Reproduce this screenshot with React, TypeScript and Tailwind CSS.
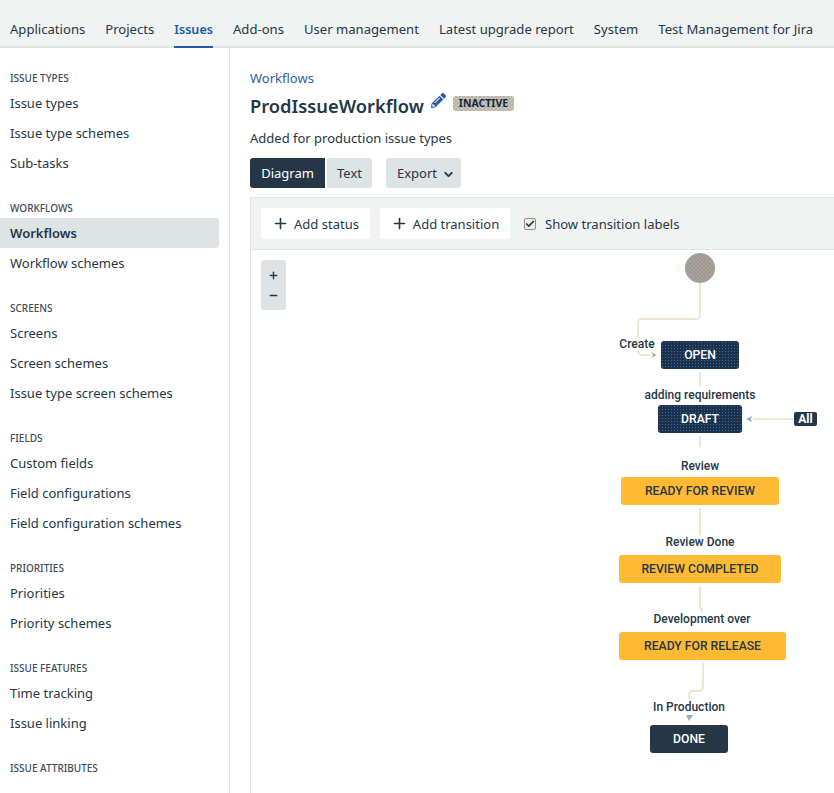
import { Check, ChevronDown, Minus, Plus } from 'lucide-react';
import { FaPencilAlt } from 'react-icons/fa';

const tabs = ['Applications', 'Projects', 'Issues', 'Add-ons', 'User management', 'Latest upgrade report', 'System', 'Test Management for Jira'];

const sections = [
  { title: 'ISSUE TYPES', items: ['Issue types', 'Issue type schemes', 'Sub-tasks'] },
  { title: 'WORKFLOWS', items: ['Workflows', 'Workflow schemes'] },
  { title: 'SCREENS', items: ['Screens', 'Screen schemes', 'Issue type screen schemes'] },
  { title: 'FIELDS', items: ['Custom fields', 'Field configurations', 'Field configuration schemes'] },
  { title: 'PRIORITIES', items: ['Priorities', 'Priority schemes'] },
  { title: 'ISSUE FEATURES', items: ['Time tracking', 'Issue linking'] },
  { title: 'ISSUE ATTRIBUTES', items: [] as string[] },
];

// positions are relative to the canvas, whose corner sits at 251,250
const nodes = [
  { name: 'OPEN', left: 410, top: 91, width: 78, kind: 'blue' },
  { name: 'DRAFT', left: 407, top: 155, width: 84, kind: 'blue' },
  { name: 'READY FOR REVIEW', left: 370, top: 227, width: 158, kind: 'amber' },
  { name: 'REVIEW COMPLETED', left: 368, top: 305, width: 162, kind: 'amber' },
  { name: 'READY FOR RELEASE', left: 368, top: 382, width: 167, kind: 'amber' },
  { name: 'DONE', left: 399, top: 475, width: 78, kind: 'dark' },
];

const labels = [
  { text: 'Create', x: 386, y: 94 },
  { text: 'adding requirements', x: 449, y: 145 },
  { text: 'Review', x: 449, y: 216 },
  { text: 'Review Done', x: 449, y: 292 },
  { text: 'Development over', x: 451, y: 369 },
  { text: 'In Production', x: 438, y: 457 },
];

function WorkflowCanvas() {
  return (
    <div className="relative flex-1">
      <div className="absolute left-[10px] top-[10px] flex h-[50px] w-[25px] flex-col items-center justify-center gap-[9px] rounded-[3px] bg-[#dee3e5] text-[#253746]">
        <Plus size={11} strokeWidth={3} />
        <Minus size={11} strokeWidth={3} />
      </div>

      <svg className="absolute left-0 top-0 h-[543px] w-[583px]" fill="none" stroke="#e6e0c8" strokeWidth="1.5">
        <path d="M449 33V65Q449 69 445 69H391Q387 69 387 73V100Q387 105 392 105H400" />
        <path d="M449 122V136" />
        <path d="M449 186V197" />
        <path d="M449 258V285" />
        <path d="M449 336V357Q449 358 451 359V364" />
        <path d="M452 413V436Q452 441 447 441H442Q438 441 438 446V449" />
        <path d="M544 169H502" />
        <path d="M400 102L406 105L400 108L402 105Z" fill="#b9a890" stroke="none" />
        <path d="M495 169L501 166L500 169L501 172Z" fill="#8fb0c4" stroke="none" />
        <path d="M435 465H442L438 471Z" fill="#8fb0c4" stroke="none" />
      </svg>

      <div className="absolute left-[434px] top-[3px] h-[30px] w-[30px] rounded-full bg-[repeating-conic-gradient(#cf8a50_0_25%,#74aedb_0_50%)] bg-[length:4px_4px]" />

      {labels.map((l) => (
        <span
          key={l.text}
          style={{ left: l.x, top: l.y }}
          className="absolute -translate-x-1/2 -translate-y-1/2 whitespace-nowrap bg-white font-['Roboto',sans-serif] text-[12px] font-medium leading-[13px] text-[#253746]"
        >
          {l.text}
        </span>
      ))}

      {nodes.map((n) => (
        <div
          key={n.name}
          style={{ left: n.left, top: n.top, width: n.width }}
          className={`absolute flex h-[28px] items-center justify-center rounded-[3px] pt-[1px] font-['Roboto',sans-serif] text-[12.2px] font-medium ${
            n.kind === 'amber'
              ? 'bg-[#ffb932] text-[#253746]'
              : n.kind === 'blue'
                ? 'bg-[#1f3148] bg-[radial-gradient(#1f6fc4_0.7px,transparent_0.8px)] bg-[length:3px_3px] font-bold text-white'
                : 'bg-[#253746] font-bold text-white'
          }`}
        >
          {n.name}
        </div>
      ))}

      <span className="absolute left-[543px] top-[162px] flex h-[14px] w-[23px] items-center justify-center rounded-[2px] bg-[#253746] font-['Roboto',sans-serif] text-[12px] font-bold text-white">
        All
      </span>
    </div>
  );
}

export default function App() {
  return (
    <div className="flex h-[793px] w-[834px] flex-col overflow-hidden bg-white font-['Noto_Sans',sans-serif] text-[13px] text-[#253746]">
      <nav className="flex h-[48px] shrink-0 items-start border-b-2 border-[#dfe5e6] bg-[#f1f3f3] pl-[10px] text-[13.1px]">
        {tabs.map((t) => (
          <a
            key={t}
            className={`mr-[20px] flex h-[48px] items-center whitespace-nowrap border-b-2 ${
              t === 'Issues' ? 'border-[#205aa7] pt-[14px] text-[12.6px] font-semibold text-[#205aa7]' : 'border-transparent pt-[13px]'
            }`}
          >
            {t}
          </a>
        ))}
      </nav>

      <div className="flex min-h-0 flex-1">
        <aside className="w-[230px] shrink-0 border-r border-[#dfe5e6] pr-[10px] pt-[18px]">
          {sections.map((s) => (
            <div key={s.title} className="mb-[18px]">
              <h3 className="flex h-[22px] items-center pl-[10px] pt-[2px] text-[10px] font-medium text-[#3e4c59]">{s.title}</h3>
              {s.items.map((i) => (
                <a
                  key={i}
                  className={`flex h-[30px] items-center rounded-r-[3px] pl-[10px] pt-[2px] ${
                    i === 'Workflows' ? 'bg-[#dee3e5] font-semibold' : ''
                  }`}
                >
                  {i}
                </a>
              ))}
            </div>
          ))}
        </aside>

        <main className="flex min-w-0 flex-1 flex-col pl-[20px] pt-[20px]">
          <a className="text-[13px] leading-[20px] text-[#2a5f9e]">Workflows</a>
          <div className="mt-[5px] flex h-[26px] items-center">
            <h1 className="text-[18.3px] font-semibold">ProdIssueWorkflow</h1>
            <FaPencilAlt className="mb-[12px] ml-[7px] text-[#2d5c96]" size={15} />
            <span className="mb-[5px] ml-[7px] rounded-[3px] bg-[repeating-conic-gradient(#d9a878_0_25%,#a9cfe6_0_50%)] bg-[length:4px_4px] px-[6px] text-[10.5px] font-bold leading-[15px] text-[#17263a]">
              INACTIVE
            </span>
          </div>
          <p className="mt-[9px] leading-[20px]">Added for production issue types</p>

          <div className="mt-[10px] flex h-[30px] shrink-0">
            <button className="w-[75px] rounded-l-[3px] bg-[#253746] pt-[2px] text-white">Diagram</button>
            <button className="ml-[2px] w-[45px] rounded-r-[3px] bg-[#dee3e5] pt-[2px]">Text</button>
            <button className="ml-[14px] flex w-[75px] items-center justify-center gap-[5px] rounded-[3px] bg-[#dee3e5] pl-[5px] pt-[2px]">
              Export
              <ChevronDown size={13} strokeWidth={3.5} />
            </button>
          </div>

          <section className="mt-[9px] flex flex-1 flex-col border-l border-t border-[#dfe5e6]">
            <div className="flex h-[52px] shrink-0 items-center border-b border-[#dfe5e6] bg-[#f1f3f3] pl-[10px]">
              <button className="flex h-[31px] w-[109px] items-center justify-center gap-[5px] rounded-[3px] bg-white pt-[2px]">
                <Plus size={17} strokeWidth={2.25} className="-mt-[2px]" />
                Add status
              </button>
              <button className="ml-[10px] flex h-[31px] w-[130px] items-center justify-center gap-[5px] rounded-[3px] bg-white pt-[2px]">
                <Plus size={17} strokeWidth={2.25} className="-mt-[2px]" />
                Add transition
              </button>
              <span className="ml-[14px] flex h-[12px] w-[12px] items-center justify-center rounded-[2px] border border-[#a08a78] bg-[#f2efe6]">
                <Check size={10} strokeWidth={4} />
              </span>
              <span className="ml-[9px] pt-[2px] text-[13.05px]">Show transition labels</span>
            </div>
            <WorkflowCanvas />
          </section>
        </main>
      </div>
    </div>
  );
}
